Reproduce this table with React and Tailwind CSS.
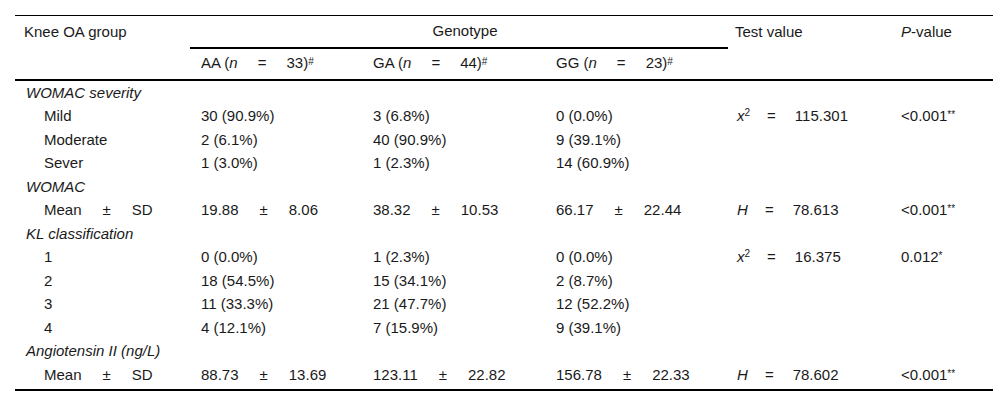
import React from 'react';

const Pm = ({ a, b }) => (
  <>
    {a}
    <span className="inline-block mx-[21px]">±</span>
    {b}
  </>
);

const Sup = ({ children }) => (
  <sup className="text-[10px] relative -top-[3px]">{children}</sup>
);

const Stat = ({ k, v }) => (
  <>
    {k === 'x2' ? (
      <span>
        <i>x</i>
        <sup className="text-[10px]">2</sup>
      </span>
    ) : (
      <i>H</i>
    )}
    <span className="inline-block ml-[17px] mr-[19px]">=</span>
    {v}
  </>
);

const rows = [
  { label: 'WOMAC severity', group: true },
  { label: 'Mild', c: ['30 (90.9%)', '3 (6.8%)', '0 (0.0%)'], t: <Stat k="x2" v="115.301" />, p: <>&lt;0.001<Sup>**</Sup></> },
  { label: 'Moderate', c: ['2 (6.1%)', '40 (90.9%)', '9 (39.1%)'] },
  { label: 'Sever', c: ['1 (3.0%)', '1 (2.3%)', '14 (60.9%)'] },
  { label: 'WOMAC', group: true },
  {
    label: <Pm a="Mean" b="SD" />,
    c: [<Pm a="19.88" b="8.06" />, <Pm a="38.32" b="10.53" />, <Pm a="66.17" b="22.44" />],
    t: <Stat k="H" v="78.613" />,
    p: <>&lt;0.001<Sup>**</Sup></>,
  },
  { label: 'KL classification', group: true },
  { label: '1', c: ['0 (0.0%)', '1 (2.3%)', '0 (0.0%)'], t: <Stat k="x2" v="16.375" />, p: <>0.012<Sup>*</Sup></> },
  { label: '2', c: ['18 (54.5%)', '15 (34.1%)', '2 (8.7%)'] },
  { label: '3', c: ['11 (33.3%)', '21 (47.7%)', '12 (52.2%)'] },
  { label: '4', c: ['4 (12.1%)', '7 (15.9%)', '9 (39.1%)'] },
  { label: 'Angiotensin II (ng/L)', group: true },
  {
    label: <Pm a="Mean" b="SD" />,
    c: [<Pm a="88.73" b="13.69" />, <Pm a="123.11" b="22.82" />, <Pm a="156.78" b="22.33" />],
    t: <Stat k="H" v="78.602" />,
    p: <>&lt;0.001<Sup>**</Sup></>,
  },
];

const NHead = ({ g, n }) => (
  <>
    {g} (<i>n</i>
    <span className="inline-block ml-[20px] mr-[20px]">=</span>
    {n})<Sup>#</Sup>
  </>
);

export default function App() {
  return (
    <div
      className="w-[1000px] h-[408px] bg-white text-[#1a1a1a] text-[15px] pt-[15px] pl-[15px]"
      style={{ fontFamily: '"Liberation Sans", Arial, sans-serif' }}
    >
      <table className="table-fixed border-collapse w-[978px]">
        <colgroup>
          <col className="w-[175px]" />
          <col className="w-[172px]" />
          <col className="w-[183px]" />
          <col className="w-[183px]" />
          <col className="w-[162px]" />
          <col className="w-[103px]" />
        </colgroup>
        <thead>
          <tr className="border-t border-black h-[32px]">
            <td rowSpan={2} className="align-top pl-[9px] pt-[5px] border-b-2 border-black">
              Knee OA group
            </td>
            <td colSpan={3} className="text-center pl-[12px] border-b-2 border-black">
              Genotype
            </td>
            <td rowSpan={2} className="align-top pl-[7px] pt-[5px] border-b-2 border-black">
              Test value
            </td>
            <td rowSpan={2} className="align-top pl-[11px] pt-[5px] border-b-2 border-black">
              <i>P</i>-value
            </td>
          </tr>
          <tr className="h-[32px] border-b-2 border-black">
            <td className="pl-[11px]"><NHead g="AA" n="33" /></td>
            <td className="pl-[11px]"><NHead g="GA" n="44" /></td>
            <td className="pl-[11px]"><NHead g="GG" n="23" /></td>
          </tr>
        </thead>
        <tbody className="border-b-2 border-black">
          {rows.map((r, i) =>
            r.group ? (
              <tr key={i} className="h-[23.5px] leading-[23.5px]">
                <td colSpan={6} className="pl-[11px] italic whitespace-nowrap">{r.label}</td>
              </tr>
            ) : (
              <tr key={i} className={`h-[23.5px] leading-[23.5px] ${i === rows.length - 1 ? 'h-[27.5px] align-top' : ''}`}>
                <td className="pl-[29px] whitespace-nowrap">{r.label}</td>
                <td className="pl-[11px] whitespace-nowrap">{r.c[0]}</td>
                <td className="pl-[11px] whitespace-nowrap">{r.c[1]}</td>
                <td className="pl-[11px] whitespace-nowrap">{r.c[2]}</td>
                <td className="pl-[9px] whitespace-nowrap">{r.t}</td>
                <td className="pl-[11px] whitespace-nowrap">{r.p}</td>
              </tr>
            )
          )}
        </tbody>
      </table>
    </div>
  );
}
